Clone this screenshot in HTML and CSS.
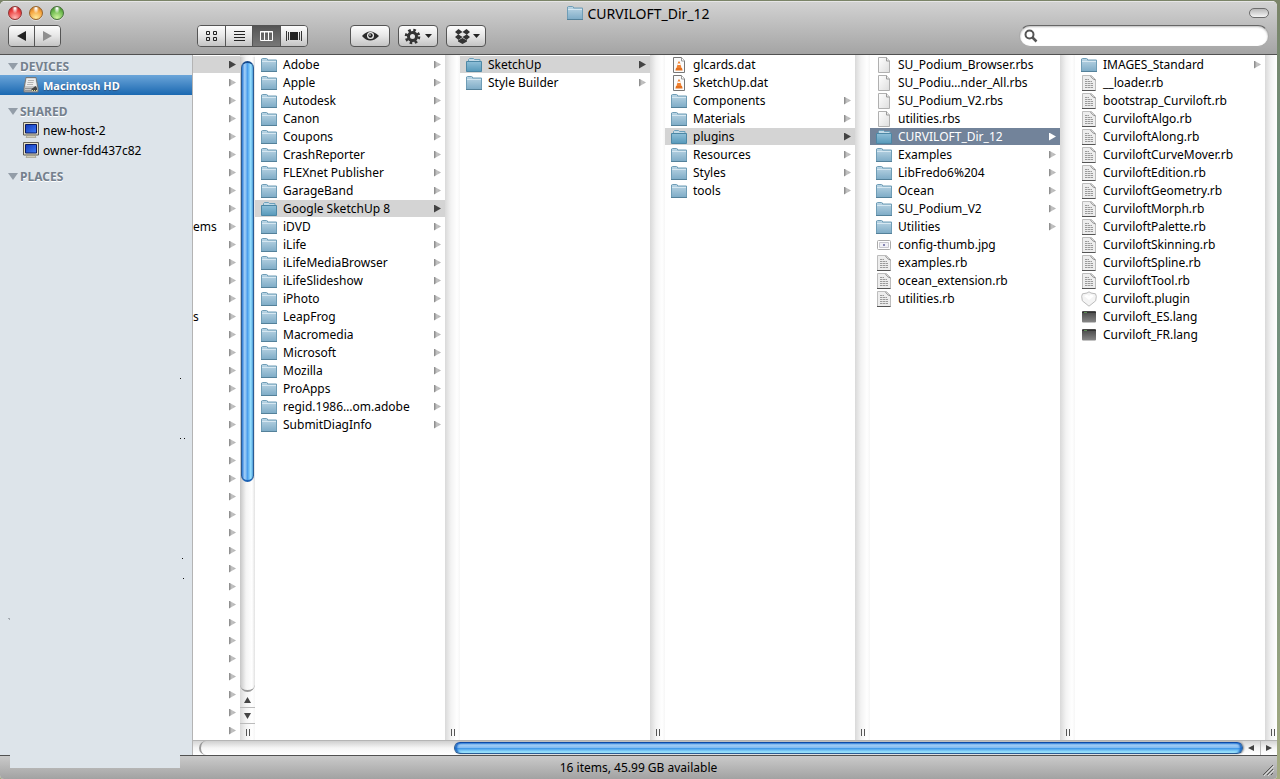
FILE: index.html
```html
<!DOCTYPE html>
<html lang="en">
<head>
    <meta charset="UTF-8">
    <meta name="viewport" content="width=device-width, initial-scale=1.0">
    <title>CURVILOFT_Dir_12</title>
    <link rel="stylesheet" href="styles.css">
</head>
<body>
    <svg class="sprite" aria-hidden="true">
        <defs>
            <linearGradient id="g-folder" x1="0" y1="0" x2="0" y2="1"><stop offset="0" stop-color="#bcd6e5"/><stop offset="1" stop-color="#7dabc6"/></linearGradient>
            <linearGradient id="g-open" x1="0" y1="0" x2="0" y2="1"><stop offset="0" stop-color="#8fbfd8"/><stop offset="1" stop-color="#5799ba"/></linearGradient>
            <linearGradient id="g-page" x1="0" y1="0" x2="1" y2="1"><stop offset="0" stop-color="#fff"/><stop offset="1" stop-color="#dedede"/></linearGradient>
            <linearGradient id="g-dark" x1="0" y1="0" x2="0" y2="1"><stop offset="0" stop-color="#444"/><stop offset="1" stop-color="#888"/></linearGradient>
            <linearGradient id="g-screen" x1="0" y1="0" x2="1" y2="1"><stop offset="0" stop-color="#1238b8"/><stop offset="1" stop-color="#3f7cf5"/></linearGradient>
        </defs>
        <symbol id="i-folder" viewBox="0 0 16 16">
            <path d="M.5 3V2l1-.5h4l1 .5v1h9v11.500H.5z" fill="url(#g-folder)" stroke="#6f9db6"/>
            <path d="M1 4.500h14" stroke="#d5e7f1"/>
            <path d="M0 14.500h16" stroke="#54819a"/>
        </symbol>
        <symbol id="i-open" viewBox="0 0 16 16">
            <path d="M2.500 5V2.500l1-1h4l1 1h5.500V5z" fill="#c2dae7" stroke="#6da0bb"/>
            <path d="M.5 4.500h15v10H.5z" fill="url(#g-open)" stroke="#4c87a5"/>
        </symbol>
        <symbol id="i-page" viewBox="0 0 16 16">
            <path d="M2.500.5h8l3 3.500v11.500h-11z" fill="url(#g-page)" stroke="#b0b0b0"/>
            <path d="M10.500.5V4h3" fill="#ececec" stroke="#999"/>
        </symbol>
        <symbol id="i-script" viewBox="0 0 16 16">
            <path d="M1.500.5h9l4 4v11h-13z" fill="#ededed" stroke="#bdbdbd"/>
            <path d="M9.500 1q2 3.500 5 4" fill="#fff" stroke="#8a8a8a"/>
            <path d="M4 4.500h4M4 6.500h7M4 8.500h8M4 10.500h8M4 12.500h8" stroke="#9a9a9a" stroke-dasharray="2.500 .5"/>
            <path d="M1 15.500h13.500" stroke="#555"/>
        </symbol>
        <symbol id="i-cone" viewBox="0 0 16 16">
            <path d="M2.500.5h8l3 3.500v11.500h-11z" fill="#fbfbfb" stroke="#777"/>
            <path d="M10.500.5V4h3" fill="#fff" stroke="#999"/>
            <path d="M7.300 4.500h1.400l1.800 6.500h-5z" fill="#f08231"/>
            <path d="M6.700 6.500h2.600l.5 1.500H6.200z" fill="#fff"/>
            <path d="M5 11h6l.6 2.500H4.400z" fill="#e3701f"/>
        </symbol>
        <symbol id="i-thumb" viewBox="0 0 16 16">
            <rect x="1.500" y="3.500" width="13" height="9" rx="1" fill="#fff" stroke="#aaa"/>
            <path d="M3.500 5.500h9v5h-9z" fill="#f0f0f5" stroke="#c9c9cf"/>
            <path d="M7 7h2v2H7z" fill="#8887b4"/>
        </symbol>
        <symbol id="i-plugin" viewBox="0 0 16 16">
            <path d="M8 .8 10 2l4.500.8.8 2.500-.6 4.500L8 15.200 1.300 9.800.7 5.300l.8-2.500L6 2z" fill="#f4f4f4" stroke="#bbb"/>
            <path d="m3 5 3-1.500 2 1.500 2-1.500L13 5 8 9z" fill="#fff"/>
        </symbol>
        <symbol id="i-exec" viewBox="0 0 16 16">
            <rect x="1" y="2" width="14" height="11.500" rx="1" fill="url(#g-dark)"/>
            <path d="M1 3.500h14" stroke="#333"/>
            <path d="M3 3.500h3" stroke="#5b8a53"/>
        </symbol>
        <symbol id="i-disk" viewBox="0 0 16 16">
            <path d="M3 .5h10L15 11v4H1v-4z" fill="#c6c6c6" stroke="#777"/>
            <path d="M3.500 1.500h9l1 7.500h-11z" fill="#ededed"/>
            <path d="M5 3.500h6M4.500 5.500h6M4 7.500h6" stroke="#b4b4b4"/>
            <path d="M2 11.500h9M2 13.500h6" stroke="#969696"/>
            <path d="M8.500 14v-2l4-3 1.500 2v3z" fill="#444"/>
            <path d="M9 13.500h5" stroke="#e6e6a0" stroke-dasharray="1 1"/>
        </symbol>
        <symbol id="i-pc" viewBox="0 0 16 16">
            <path d="M.5.5h15v12.500H.5z" fill="#e6e0c6" stroke="#5f5c52"/>
            <path d="M2.500 2.500h11v8.500h-11z" fill="url(#g-screen)" stroke="#0a1a60"/>
            <path d="M4 13.500h8l1 2H3z" fill="#d3cdb6" stroke="#8b8775" stroke-width=".5"/>
        </symbol>
    </svg>

    <div class="window">
        <header class="toolbar">
            <div class="titlebar">
                <div class="lights">
                    <button class="light red" aria-label="Close"></button>
                    <button class="light amber" aria-label="Minimize"></button>
                    <button class="light green" aria-label="Zoom"></button>
                </div>
                <h1><svg class="icon"><use href="#i-folder"/></svg>CURVILOFT_Dir_12</h1>
                <button class="pill" aria-label="Toggle toolbar"></button>
            </div>
            <div class="tools">
                <div class="group nav">
                    <button aria-label="Back"><svg width="25" height="20"><path d="M8 10l9-5v10z" fill="#222"/></svg></button>
                    <button aria-label="Forward"><svg width="25" height="20"><path d="M17 10 8 5v10z" fill="#8f8f8f"/></svg></button>
                </div>
                <div class="group views">
                    <button aria-label="Icon view"><svg width="27" height="20"><path d="M8.500 5.500h3v3h-3zM15.500 5.500h3v3h-3zM8.500 11.500h3v3h-3zM15.500 11.500h3v3h-3z" fill="none" stroke="#222"/></svg></button>
                    <button aria-label="List view"><svg width="26" height="20"><path d="M8 5.500h11M8 8.500h11M8 11.500h11M8 14.500h11" stroke="#222"/></svg></button>
                    <button class="active" aria-label="Column view"><svg width="27" height="20"><path d="M7.500 5.500h12v9h-12zM11.500 5v10M15.500 5v10M7 6h13" fill="none" stroke="#fff"/></svg></button>
                    <button aria-label="Cover flow"><svg width="26" height="20"><path d="M9 6h8v8H9z" fill="#222"/><path d="M5.500 5v10M7.500 6v8M18.500 6v8M20.500 5v10" stroke="#333"/></svg></button>
                </div>
                <div class="actions">
                    <button class="single" aria-label="Quick look"><svg width="38" height="20"><path d="M11 10q8-9 17 0-9 9-17 0z" fill="#2a2a2a"/><circle cx="19.500" cy="9.500" r="3.500" fill="#eee"/><circle cx="19.500" cy="9.500" r="2.200" fill="#222"/><circle cx="19" cy="9" r=".8" fill="#fff"/></svg></button>
                    <button class="single" aria-label="Action"><svg width="38" height="20"><circle cx="13.500" cy="10.500" r="6.300" fill="none" stroke="#333" stroke-width="3" stroke-dasharray="2.500 2.450"/><circle cx="13.500" cy="10.500" r="4" fill="none" stroke="#333" stroke-width="3"/><path d="M26 8h7l-3.500 4z" fill="#222"/></svg></button>
                    <button class="single" aria-label="Dropbox"><svg width="38" height="20"><path d="m11.500 3 4 3 4-3 3.500 3-3 2.500 3 2.500-3.500 3-4-3-4 3L8 11l3-2.500L8 6z" fill="#333"/><path d="m15.500 6 4 2.500-4 2.500-4-2.500z" fill="#e4e4e4"/><path d="m11 14.500 4.500-2.500 4.500 2.500v1L15.500 18 11 15.500z" fill="#333"/><path d="M26 8h7l-3.500 4z" fill="#222"/></svg></button>
                </div>
                <label class="search">
                    <svg width="14" height="14"><circle cx="5.500" cy="5.500" r="4" fill="none" stroke="#555" stroke-width="2"/><path d="m8.500 8.500 4 4" stroke="#555" stroke-width="2.500"/></svg>
                    <input type="text" aria-label="Search">
                </label>
            </div>
        </header>

        <main class="body">
            <nav class="sidebar">
                <h2>DEVICES</h2>
                <a class="active" href="#"><svg class="icon"><use href="#i-disk"/></svg>Macintosh HD</a>
                <h2>SHARED</h2>
                <a href="#"><svg class="icon"><use href="#i-pc"/></svg>new-host-2</a>
                <a href="#"><svg class="icon"><use href="#i-pc"/></svg>owner-fdd437c82</a>
                <h2>PLACES</h2>
                <svg class="specks" width="192" height="700" aria-hidden="true"><path d="M180 323h1v1h-1zM180 383h1v1h-1zM184 383h1v1h-1zM182 503h1v1h-1zM183 523h1v1h-1z" fill="#111"/><path d="M8 563h2v2H9v-1H8z" fill="#a5abb2"/></svg>
            </nav>

            <div class="browser">
                <div class="columns">
                    <section class="column first">
                        <div class="list">
                            <a class="dir selected" href="#"></a>
                            <a class="dir" href="#"></a>
                            <a class="dir" href="#"></a>
                            <a class="dir" href="#"></a>
                            <a class="dir" href="#"></a>
                            <a class="dir" href="#"></a>
                            <a class="dir" href="#"></a>
                            <a class="dir" href="#"></a>
                            <a class="dir" href="#"></a>
                            <a class="dir" href="#">ems</a>
                            <a class="dir" href="#"></a>
                            <a class="dir" href="#"></a>
                            <a class="dir" href="#"></a>
                            <a class="dir" href="#"></a>
                            <a class="dir" href="#">s</a>
                            <a class="dir" href="#"></a>
                            <a class="dir" href="#"></a>
                            <a class="dir" href="#"></a>
                            <a class="dir" href="#"></a>
                            <a class="dir" href="#"></a>
                            <a class="dir" href="#"></a>
                            <a class="dir" href="#"></a>
                            <a class="dir" href="#"></a>
                            <a class="dir" href="#"></a>
                            <a class="dir" href="#"></a>
                            <a class="dir" href="#"></a>
                            <a class="dir" href="#"></a>
                            <a class="dir" href="#"></a>
                            <a class="dir" href="#"></a>
                            <a class="dir" href="#"></a>
                            <a class="dir" href="#"></a>
                            <a class="dir" href="#"></a>
                            <a class="dir" href="#"></a>
                            <a class="dir" href="#"></a>
                            <a class="dir" href="#"></a>
                            <a class="dir" href="#"></a>
                            <a class="dir" href="#"></a>
                            <a class="dir" href="#"></a>
                        </div>
                        <div class="divider">
                            <div class="vtrack"><div class="vthumb"></div></div>
                            <button class="step" aria-label="Scroll up"><svg width="15" height="15"><path d="M7.500 5 11 11H4z" fill="#444"/></svg></button>
                            <button class="step" aria-label="Scroll down"><svg width="15" height="15"><path d="M7.500 11 11 5H4z" fill="#444"/></svg></button>
                            <span class="grip"></span>
                        </div>
                    </section>

                    <section class="column">
                        <div class="list">
                            <a class="dir" href="#"><svg class="icon"><use href="#i-folder"/></svg>Adobe</a>
                            <a class="dir" href="#"><svg class="icon"><use href="#i-folder"/></svg>Apple</a>
                            <a class="dir" href="#"><svg class="icon"><use href="#i-folder"/></svg>Autodesk</a>
                            <a class="dir" href="#"><svg class="icon"><use href="#i-folder"/></svg>Canon</a>
                            <a class="dir" href="#"><svg class="icon"><use href="#i-folder"/></svg>Coupons</a>
                            <a class="dir" href="#"><svg class="icon"><use href="#i-folder"/></svg>CrashReporter</a>
                            <a class="dir" href="#"><svg class="icon"><use href="#i-folder"/></svg>FLEXnet Publisher</a>
                            <a class="dir" href="#"><svg class="icon"><use href="#i-folder"/></svg>GarageBand</a>
                            <a class="dir selected" href="#"><svg class="icon"><use href="#i-open"/></svg>Google SketchUp 8</a>
                            <a class="dir" href="#"><svg class="icon"><use href="#i-folder"/></svg>iDVD</a>
                            <a class="dir" href="#"><svg class="icon"><use href="#i-folder"/></svg>iLife</a>
                            <a class="dir" href="#"><svg class="icon"><use href="#i-folder"/></svg>iLifeMediaBrowser</a>
                            <a class="dir" href="#"><svg class="icon"><use href="#i-folder"/></svg>iLifeSlideshow</a>
                            <a class="dir" href="#"><svg class="icon"><use href="#i-folder"/></svg>iPhoto</a>
                            <a class="dir" href="#"><svg class="icon"><use href="#i-folder"/></svg>LeapFrog</a>
                            <a class="dir" href="#"><svg class="icon"><use href="#i-folder"/></svg>Macromedia</a>
                            <a class="dir" href="#"><svg class="icon"><use href="#i-folder"/></svg>Microsoft</a>
                            <a class="dir" href="#"><svg class="icon"><use href="#i-folder"/></svg>Mozilla</a>
                            <a class="dir" href="#"><svg class="icon"><use href="#i-folder"/></svg>ProApps</a>
                            <a class="dir" href="#"><svg class="icon"><use href="#i-folder"/></svg>regid.1986…om.adobe</a>
                            <a class="dir" href="#"><svg class="icon"><use href="#i-folder"/></svg>SubmitDiagInfo</a>
                        </div>
                        <div class="divider"><span class="grip"></span></div>
                    </section>

                    <section class="column">
                        <div class="list">
                            <a class="dir selected" href="#"><svg class="icon"><use href="#i-open"/></svg>SketchUp</a>
                            <a class="dir" href="#"><svg class="icon"><use href="#i-folder"/></svg>Style Builder</a>
                        </div>
                        <div class="divider"><span class="grip"></span></div>
                    </section>

                    <section class="column">
                        <div class="list">
                            <a href="#"><svg class="icon"><use href="#i-cone"/></svg>glcards.dat</a>
                            <a href="#"><svg class="icon"><use href="#i-cone"/></svg>SketchUp.dat</a>
                            <a class="dir" href="#"><svg class="icon"><use href="#i-folder"/></svg>Components</a>
                            <a class="dir" href="#"><svg class="icon"><use href="#i-folder"/></svg>Materials</a>
                            <a class="dir selected" href="#"><svg class="icon"><use href="#i-open"/></svg>plugins</a>
                            <a class="dir" href="#"><svg class="icon"><use href="#i-folder"/></svg>Resources</a>
                            <a class="dir" href="#"><svg class="icon"><use href="#i-folder"/></svg>Styles</a>
                            <a class="dir" href="#"><svg class="icon"><use href="#i-folder"/></svg>tools</a>
                        </div>
                        <div class="divider"><span class="grip"></span></div>
                    </section>

                    <section class="column">
                        <div class="list">
                            <a href="#"><svg class="icon"><use href="#i-page"/></svg>SU_Podium_Browser.rbs</a>
                            <a href="#"><svg class="icon"><use href="#i-page"/></svg>SU_Podiu…nder_All.rbs</a>
                            <a href="#"><svg class="icon"><use href="#i-page"/></svg>SU_Podium_V2.rbs</a>
                            <a href="#"><svg class="icon"><use href="#i-page"/></svg>utilities.rbs</a>
                            <a class="dir current" href="#"><svg class="icon"><use href="#i-open"/></svg>CURVILOFT_Dir_12</a>
                            <a class="dir" href="#"><svg class="icon"><use href="#i-folder"/></svg>Examples</a>
                            <a class="dir" href="#"><svg class="icon"><use href="#i-folder"/></svg>LibFredo6%204</a>
                            <a class="dir" href="#"><svg class="icon"><use href="#i-folder"/></svg>Ocean</a>
                            <a class="dir" href="#"><svg class="icon"><use href="#i-folder"/></svg>SU_Podium_V2</a>
                            <a class="dir" href="#"><svg class="icon"><use href="#i-folder"/></svg>Utilities</a>
                            <a href="#"><svg class="icon"><use href="#i-thumb"/></svg>config-thumb.jpg</a>
                            <a href="#"><svg class="icon"><use href="#i-script"/></svg>examples.rb</a>
                            <a href="#"><svg class="icon"><use href="#i-script"/></svg>ocean_extension.rb</a>
                            <a href="#"><svg class="icon"><use href="#i-script"/></svg>utilities.rb</a>
                        </div>
                        <div class="divider"><span class="grip"></span></div>
                    </section>

                    <section class="column">
                        <div class="list">
                            <a class="dir" href="#"><svg class="icon"><use href="#i-folder"/></svg>IMAGES_Standard</a>
                            <a href="#"><svg class="icon"><use href="#i-script"/></svg>__loader.rb</a>
                            <a href="#"><svg class="icon"><use href="#i-script"/></svg>bootstrap_Curviloft.rb</a>
                            <a href="#"><svg class="icon"><use href="#i-script"/></svg>CurviloftAlgo.rb</a>
                            <a href="#"><svg class="icon"><use href="#i-script"/></svg>CurviloftAlong.rb</a>
                            <a href="#"><svg class="icon"><use href="#i-script"/></svg>CurviloftCurveMover.rb</a>
                            <a href="#"><svg class="icon"><use href="#i-script"/></svg>CurviloftEdition.rb</a>
                            <a href="#"><svg class="icon"><use href="#i-script"/></svg>CurviloftGeometry.rb</a>
                            <a href="#"><svg class="icon"><use href="#i-script"/></svg>CurviloftMorph.rb</a>
                            <a href="#"><svg class="icon"><use href="#i-script"/></svg>CurviloftPalette.rb</a>
                            <a href="#"><svg class="icon"><use href="#i-script"/></svg>CurviloftSkinning.rb</a>
                            <a href="#"><svg class="icon"><use href="#i-script"/></svg>CurviloftSpline.rb</a>
                            <a href="#"><svg class="icon"><use href="#i-script"/></svg>CurviloftTool.rb</a>
                            <a href="#"><svg class="icon"><use href="#i-plugin"/></svg>Curviloft.plugin</a>
                            <a href="#"><svg class="icon"><use href="#i-exec"/></svg>Curviloft_ES.lang</a>
                            <a href="#"><svg class="icon"><use href="#i-exec"/></svg>Curviloft_FR.lang</a>
                        </div>
                        <div class="divider"><span class="grip"></span></div>
                    </section>
                </div>
                <div class="hscroll">
                    <div class="htrack"><div class="hthumb"></div></div>
                    <button class="step" aria-label="Scroll left"><svg width="16" height="14"><path d="M5 7l6-3v6z" fill="#444"/></svg></button>
                    <button class="step" aria-label="Scroll right"><svg width="16" height="14"><path d="M11 7 5 4v6z" fill="#444"/></svg></button>
                </div>
            </div>
        </main>

        <footer class="status">
            <div class="flap"></div>
            <p>16 items, 45.99 GB available</p>
            <svg class="resize" width="12" height="12"><path d="M1 11 11 1M5 11l6-6M9 11l2-2" stroke="#555"/><path d="M2 12 12 2M6 12l6-6" stroke="#ddd"/></svg>
        </footer>
    </div>
</body>
</html>
```
FILE: styles.css
```css
* { margin: 0; padding: 0; box-sizing: border-box; }
body {
    font-family: "Lucida Grande", "Noto Sans", sans-serif;
    font-size: 12px; line-height: 17px; color: #000;
    height: 100vh; padding: 1px 3px 0 0; overflow: hidden;
    background: linear-gradient(180deg, #7b8468, #6f8f7c 20%, #78927f 60%, #a5ab80);
}
a { color: inherit; text-decoration: none; }
button { border: none; background: none; font: inherit; }
svg { display: block; flex: none; }
.sprite { position: absolute; width: 0; height: 0; }
.icon { width: 16px; height: 16px; }
.window { height: 100%; display: flex; flex-direction: column; background: #fff; border-radius: 5px 5px 4px 4px; overflow: hidden; }

/* toolbar */
.toolbar { height: 54px; padding: 0 8px; background: linear-gradient(180deg, #d2d2d2, #a4a4a4); border-top: 1px solid #e6e6e6; border-bottom: 1px solid #515151; }
.titlebar { height: 22px; display: grid; grid-template-columns: 1fr auto 1fr; align-items: center; }
.titlebar h1 { display: flex; align-items: center; gap: 4px; font-size: 14px; font-weight: 400; }
.lights { display: flex; gap: 7px; }
.light { width: 14px; height: 14px; border-radius: 50%; border: 1px solid #666; box-shadow: 0 1px 0 #ddd; }
.red { background: radial-gradient(ellipse at 50% 10%, #fff 5%, transparent 35%), radial-gradient(circle at 50% 90%, #ffb9b4, #ec4040 60%, #a01818); border-color: #8d3333; }
.amber { background: radial-gradient(ellipse at 50% 10%, #fff 5%, transparent 35%), radial-gradient(circle at 50% 90%, #ffeb9c, #f5a23c 60%, #a85e12); border-color: #96632b; }
.green { background: radial-gradient(ellipse at 50% 10%, #fff 5%, transparent 35%), radial-gradient(circle at 50% 90%, #d2f5a0, #6cb94e 60%, #36751f); border-color: #45703a; }
.pill { justify-self: end; width: 20px; height: 10px; border: 1px solid #6c6c6c; border-radius: 5px; background: linear-gradient(180deg, #b8b8b8, #f4f4f4); }
.tools { display: flex; align-items: center; height: 24px; }
.group { display: flex; border: 1px solid #555; border-radius: 4px; overflow: hidden; }
.group button, .single { height: 20px; background: linear-gradient(180deg, #fdfdfd, #e6e6e6 50%, #c4c4c4); }
.group button + button { border-left: 1px solid #555; }
.group .active { background: linear-gradient(180deg, #555, #777); }
.views { margin-left: 136px; }
.actions { display: flex; gap: 8px; margin: 0 16px 0 42px; }
.single { width: 40px; height: 22px; border: 1px solid #555; border-radius: 4px; }
.search { display: flex; align-items: center; gap: 4px; flex: 0 1 250px; height: 22px; margin-left: auto; padding: 0 4px; background: #fff; border: 1px solid #aaa; border-top-color: #666; border-radius: 11px; box-shadow: inset 0 1px 2px #bbb; }
.search input { flex: 1; min-width: 0; border: none; outline: none; background: none; font: inherit; }

.body { flex: 1; min-height: 0; display: flex; }

/* sidebar */
.sidebar { position: relative; flex: none; width: 193px; padding-top: 3px; background: #dde4ea; border-right: 1px solid #b4b4b4; }
.sidebar h2 { display: flex; align-items: center; gap: 2px; height: 17px; padding-left: 8px; font-size: 12px; color: #74808d; text-shadow: 0 1px 0 #fff; }
.sidebar h2::before { content: ""; border: 5px solid transparent; border-top: 7px solid #939da8; border-bottom: none; }
.sidebar a + h2 { margin-top: 8px; }
.sidebar a { display: flex; align-items: center; gap: 4px; height: 20px; padding-left: 23px; }
.sidebar .active { background: linear-gradient(180deg, #6ba5d9, #1a68b1); color: #fff; font-size: 11px; font-weight: 700; text-shadow: 0 1px 1px #2b4f7a; }
.specks { position: absolute; left: 0; top: 0; pointer-events: none; }

/* column browser */
.browser { flex: 1; min-width: 0; display: flex; flex-direction: column; }
.columns { flex: 1; min-height: 0; display: flex; overflow: hidden; }
.column { flex: 1 0 205px; display: flex; }
.first { flex: none; width: 62px; }
.list { flex: 1; padding-top: 1px; overflow: hidden; }
.list a { display: flex; align-items: center; gap: 6px; height: 17px; margin-bottom: 1px; padding: 0 4px 0 6px; white-space: nowrap; }
.first .list a { padding-left: 0; }
.dir::after { content: ""; width: 7px; height: 8px; margin-left: auto; background: linear-gradient(90deg, #858585, #c4c4c4 40%, #b0b0b0); clip-path: polygon(0 0, 100% 50%, 0 100%); }
.list .selected { background: #d4d4d4; }
.selected::after { background: #444; }
.list .current { background: #72839a; color: #fff; }
.current::after { background: #fff; }
.divider { width: 15px; display: flex; flex-direction: column; background: linear-gradient(90deg, #d9d9d9, #f3f3f3 40%, #fff 80%, #f6f6f6); }
.grip { width: 4px; height: 7px; margin: auto auto 4px 6px; border: 1px solid #555; border-width: 0 1px; }
.first .grip { margin: 5px 6px 4px; }
.vtrack { flex: 1; margin-top: 2px; padding: 4px 1px 0; border-radius: 0 0 8px 8px; background: linear-gradient(90deg, #c6c6c6, #f4f4f4 40%, #fff 80%, #e2e2e2); border-bottom: 2px solid #999; }
.vthumb { height: 67%; border-radius: 7px; border: 1px solid #2a5c94; border-top: 2px solid #174a8c; border-bottom: 2px solid #1c62b4; background: linear-gradient(90deg, #2a78d4, #a6d2f9 25%, #4c9fec 50%, #9ae2ff 80%, #4a9ad8); }
.divider .step { height: 16px; border-bottom: 1px solid #bbb; }
.hscroll { display: flex; height: 15px; background: linear-gradient(180deg, #d5d5d5, #f5f5f5 50%, #fff); border-top: 1px solid #b5b5b5; }
.htrack { flex: 1; margin-left: 6px; padding: 1px 0; border-left: 2px solid #999; border-radius: 8px 0 0 8px; background: linear-gradient(180deg, #cfcfcf, #f6f6f6 50%, #fff); }
.hthumb { height: 12px; width: calc(76% - 3px); margin-left: auto; border: 1px solid #2a5c94; border-top-color: #0d4aa8; border-radius: 7px; background: linear-gradient(180deg, #2f7ed8, #a3cdf5 20%, #85bdf2 45%, #3f96e8 52%, #a5ecff 95%); box-shadow: inset 3px 0 2px -1px #1a68c8, inset -3px 0 2px -1px #1a68c8, 1px 0 2px #888; }
.hscroll .step { width: 17px; }
.hscroll .step + .step { border-left: 1px solid #bbb; }

/* status bar */
.status { position: relative; height: 24px; display: flex; align-items: center; justify-content: center; padding-bottom: 1px; background: linear-gradient(180deg, #cacaca, #a2a2a2); border-top: 1px solid #515151; }
.flap { position: absolute; left: 10px; top: -1px; width: 170px; height: 13px; background: #dde4ea; }
.resize { position: absolute; right: 3px; bottom: 3px; }
```
